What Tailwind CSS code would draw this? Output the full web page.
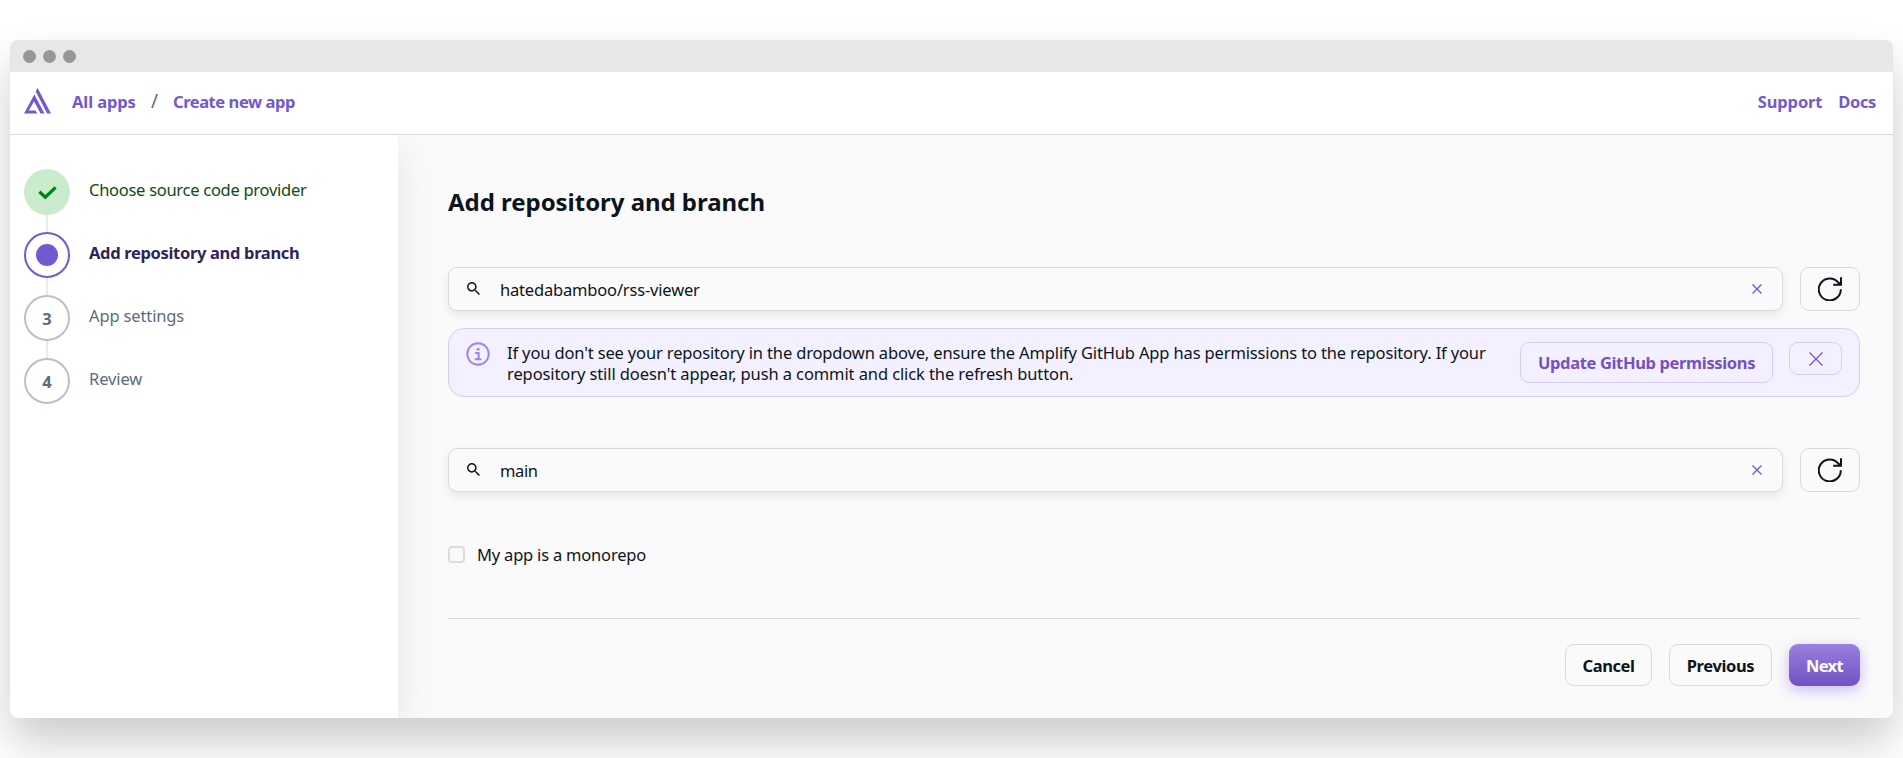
<!DOCTYPE html>
<html lang="en">
<head>
<meta charset="utf-8">
<title>Add repository and branch</title>
<script src="https://cdn.jsdelivr.net/npm/@tailwindcss/browser@4"></script>
</head>
<body class="h-screen overflow-hidden bg-white px-[10px] pt-10 font-['Noto_Sans',sans-serif] text-[16.5px] leading-[21px] text-[#0d141c]">
<div class="flex h-[678px] w-[1883px] flex-col overflow-hidden rounded-lg bg-[#fafafa] shadow-[0_24px_44px_rgba(0,0,0,0.2)]">

  <!-- window bar -->
  <div class="flex h-8 shrink-0 items-center gap-[7px] bg-[#e7e7e7] pl-[13px]">
    <span class="size-[13px] rounded-full bg-[#979797]"></span>
    <span class="size-[13px] rounded-full bg-[#979797]"></span>
    <span class="size-[13px] rounded-full bg-[#979797]"></span>
  </div>

  <!-- header -->
  <header class="relative z-10 flex h-[63px] shrink-0 items-center border-b border-[#dcdcdc] bg-white pb-[3px] pl-[14px] pr-[17px] font-bold text-[#7259d0]">
    <svg class="mb-px h-[26px] w-[27px] shrink-0" viewBox="0 0 27 26" fill="#7259d0"><path d="M10.3 6.5 12.2 9.7 4.8 22.4H11.4L13.3 25.6H0ZM10.3 6.5 20.5 25.6H16.6L8.4 10.6ZM13.6 0 27 25.6H23.1L11.7 3.4Z"/></svg>
    <nav class="flex flex-1 items-center pl-[21px]">
      <a class="w-[64px] whitespace-nowrap tracking-[-0.1px]">All apps</a>
      <span class="w-[37px] text-center text-[19px] font-normal text-[#5c6b7a]">/</span>
      <a class="whitespace-nowrap tracking-[-0.44px]">Create new app</a>
    </nav>
    <a class="mr-[16px] tracking-[-0.14px]">Support</a>
    <a class="tracking-[-0.38px]">Docs</a>
  </header>

  <div class="flex min-h-0 flex-1">
    <!-- steps -->
    <aside class="relative w-[388px] shrink-0 bg-white pl-[14px] pt-[34px] shadow-[0_12px_40px_rgba(0,0,0,0.09)]">
      <ol class="flex flex-col">
        <li class="flex gap-[19px]">
          <div class="flex flex-col items-center">
            <span class="flex size-[46px] items-center justify-center rounded-full bg-[#caeccd]">
              <svg class="mt-[1px] h-[14px] w-[19px]" viewBox="0 0 19 14" fill="none" stroke="#008412" stroke-width="3.2"><path d="M1.4 5.8 7.3 11.2 17.6 1.4"/></svg>
            </span>
            <span class="h-[17px] w-0.5 bg-[#eaeaec]"></span>
          </div>
          <span class="pt-[10px] tracking-[-0.28px] text-[#0f4a18]">Choose source code provider</span>
        </li>
        <li class="flex gap-[19px]">
          <div class="flex flex-col items-center">
            <span class="flex size-[46px] items-center justify-center rounded-full border-2 border-[#7259d0]"><span class="size-[22px] rounded-full bg-[#7259d0]"></span></span>
            <span class="h-[17px] w-0.5 bg-[#eaeaec]"></span>
          </div>
          <span class="pt-[10px] font-bold tracking-[-0.33px] text-[#30235c]">Add repository and branch</span>
        </li>
        <li class="flex gap-[19px]">
          <div class="flex flex-col items-center">
            <span class="flex size-[46px] items-center justify-center rounded-full border-2 border-[#bcbfc6] font-bold text-[#5c6b7f]">3</span>
            <span class="h-[17px] w-0.5 bg-[#eaeaec]"></span>
          </div>
          <span class="pt-[10px] tracking-[-0.14px] text-[#5c6b7f]">App settings</span>
        </li>
        <li class="flex gap-[19px]">
          <span class="flex size-[46px] items-center justify-center rounded-full border-2 border-[#bcbfc6] font-bold text-[#5c6b7f]">4</span>
          <span class="pt-[10px] tracking-[-0.1px] text-[#5c6b7f]">Review</span>
        </li>
      </ol>
    </aside>

    <main class="flex flex-1 flex-col pl-[50px] pr-[33px] pt-[50px]">
      <h1 class="h-[34px] text-[24px] font-bold leading-[34px] tracking-[-0.04px]">Add repository and branch</h1>

      <div class="mt-[48px] flex gap-[17px]">
        <div class="flex h-11 flex-1 items-center rounded-[9px] border border-[#dadbdd] bg-[#fafafa] pl-[18px] pr-[20px] shadow-[0_4px_10px_rgba(0,0,0,0.08)]">
          <svg class="-mt-[2px] size-[13px]" viewBox="3 3 17.5 17.5" fill="#0d141c"><path d="M15.5 14h-.79l-.28-.27A6.471 6.471 0 0 0 16 9.5 6.5 6.5 0 1 0 9.5 16c1.61 0 3.09-.59 4.23-1.57l.27.28v.79l5 4.99L20.49 19l-4.99-5zm-6 0C7.01 14 5 11.99 5 9.5S7.01 5 9.5 5 14 7.01 14 9.5 11.99 14 9.5 14z"/></svg>
          <span class="flex-1 pl-[20px] tracking-[-0.18px]">hatedabamboo/rss-viewer</span>
          <svg class="size-[10px]" viewBox="0 0 10 10" stroke="#7259d0" stroke-width="1.4"><path d="M.5.5l9 9M9.5.5l-9 9"/></svg>
        </div>
        <button class="flex h-11 w-[60px] items-center justify-center rounded-[9px] border border-[#dadbdd]">
          <svg class="size-6" viewBox="0 0 24 24" fill="none" stroke="#0d141c" stroke-width="2"><path d="M22.8 12.3A11 11 0 1 1 20.2 5.3L22.6 7.8M23 .2V7.8H15.2"/></svg>
        </button>
      </div>

      <div class="mt-[17px] flex h-[69px] items-start rounded-[16px] border border-[#d6cdfa] bg-[#f3f0ff] pl-[17px] pr-[17px] pt-[13px]">
        <svg class="size-[24px] shrink-0" viewBox="0 0 24 24" fill="none" stroke="#9d85e3"><circle cx="12" cy="12" r="10.7" stroke-width="1.9"/><path d="M9.2 11H12.6V17M8.8 17.2H15.4" stroke-width="2"/><path d="M10.6 7.3H13.6" stroke-width="2.2"/></svg>
        <p class="w-[1013px] whitespace-nowrap pl-[17px]"><span class="tracking-[-0.148px]">If you don't see your repository in the dropdown above, ensure the Amplify GitHub App has permissions to the repository. If your</span><br><span class="tracking-[-0.1px]">repository still doesn't appear, push a commit and click the refresh button.</span></p>
        <button class="ml-auto h-[41px] w-[253px] whitespace-nowrap rounded-[9px] border border-[#d6cdfa] font-bold tracking-[-0.36px] text-[#7650c4]">Update GitHub permissions</button>
        <button class="ml-4 flex h-[33px] w-[53px] items-center justify-center rounded-[9px] border border-[#d6cdfa]">
          <svg class="size-[14px]" viewBox="0 0 14 14" stroke="#7650c4" stroke-width="1.2"><path d="M.5.5l13 13M13.5.5l-13 13"/></svg>
        </button>
      </div>

      <div class="mt-[51px] flex gap-[17px]">
        <div class="flex h-11 flex-1 items-center rounded-[9px] border border-[#dadbdd] bg-[#fafafa] pl-[18px] pr-[20px] shadow-[0_4px_10px_rgba(0,0,0,0.08)]">
          <svg class="-mt-[2px] size-[13px]" viewBox="3 3 17.5 17.5" fill="#0d141c"><path d="M15.5 14h-.79l-.28-.27A6.471 6.471 0 0 0 16 9.5 6.5 6.5 0 1 0 9.5 16c1.61 0 3.09-.59 4.23-1.57l.27.28v.79l5 4.99L20.49 19l-4.99-5zm-6 0C7.01 14 5 11.99 5 9.5S7.01 5 9.5 5 14 7.01 14 9.5 11.99 14 9.5 14z"/></svg>
          <span class="flex-1 pl-[20px] tracking-[-0.4px]">main</span>
          <svg class="-mt-[1px] size-[10px]" viewBox="0 0 10 10" stroke="#7259d0" stroke-width="1.4"><path d="M.5.5l9 9M9.5.5l-9 9"/></svg>
        </div>
        <button class="flex h-11 w-[60px] items-center justify-center rounded-[9px] border border-[#dadbdd]">
          <svg class="size-6" viewBox="0 0 24 24" fill="none" stroke="#0d141c" stroke-width="2"><path d="M22.8 12.3A11 11 0 1 1 20.2 5.3L22.6 7.8M23 .2V7.8H15.2"/></svg>
        </button>
      </div>

      <label class="mt-[52px] flex h-[21px] items-center gap-[12px]">
        <span class="size-[17px] rounded-[4px] border-2 border-[#dcdddf]"></span>
        <span class="tracking-[-0.2px]">My app is a monorepo</span>
      </label>

      <div class="mt-[53px] flex justify-end gap-[17px] border-t border-[#d6d8da] pt-[25px] font-bold">
        <button class="h-[42px] w-[87px] rounded-[9px] border border-[#dadbdd] tracking-[-0.4px]">Cancel</button>
        <button class="h-[42px] w-[103px] rounded-[9px] border border-[#dadbdd] tracking-[-0.36px]">Previous</button>
        <button class="h-[42px] w-[71px] rounded-[9px] bg-linear-to-b from-[#9a80e0] to-[#744fc2] tracking-[-0.7px] text-white shadow-[0_4px_14px_rgba(125,90,240,0.4)]">Next</button>
      </div>
    </main>
  </div>
</div>
</body>
</html>
